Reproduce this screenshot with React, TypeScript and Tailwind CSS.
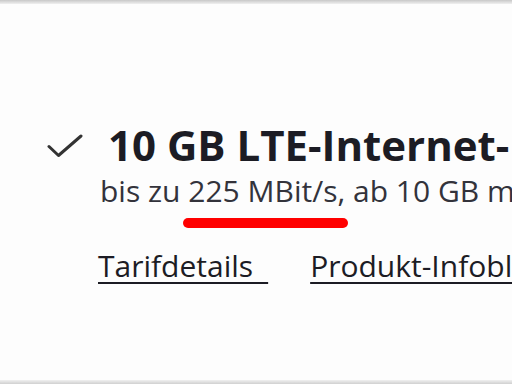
export default function App() {
  return (
    <div className="w-[512px] h-[384px] overflow-hidden bg-[#fdfdfd] font-['Open_Sans',sans-serif] flex flex-col">
      <div className="h-[4px] bg-gradient-to-b from-[#c8c8c8] to-[#f0f0f0]" />
      <div className="flex-1 flex flex-col pt-[113px] whitespace-nowrap">
        <div className="flex items-center">
          <svg width="36" height="24" viewBox="0 0 36 24" className="ml-[47px] mt-[2px] shrink-0">
            <path d="M2 12.5 L11.5 21.5 L34 2" fill="none" stroke="#333" strokeWidth="3" strokeLinecap="round" strokeLinejoin="round" />
          </svg>
          <h1 className="ml-[25px] text-[42px] leading-[56px] font-bold text-[#1c1c24]">10 GB LTE-Internet-Flat</h1>
        </div>
        <p className="ml-[100px] text-[30px] leading-[36px] text-[#33333b]">
          bis zu{" "}
          <span className="relative">
            225 MBit/s
            <span className="absolute left-[-5px] right-[-11px] top-[48px] h-[10px] rounded-full bg-[#ff0000]" />
          </span>
          , ab 10 GB mit max. 32 KBit/s
        </p>
        <div className="flex mt-[40px] ml-[98px] text-[30px] leading-[34px] text-[#1c1c24]">
          <a className="underline underline-offset-[5px] decoration-[2px]">Tarifdetails&ensp;</a>
          <span className="mx-[21px] -my-[8px] w-px bg-[#f0f0f0]" />
          <a className="underline underline-offset-[5px] decoration-[2px]">Produkt-Infoblatt</a>
        </div>
      </div>
      <div className="h-[4px] bg-gradient-to-b from-[#f0f0f0] to-[#d0d0d0]" />
    </div>
  );
}
